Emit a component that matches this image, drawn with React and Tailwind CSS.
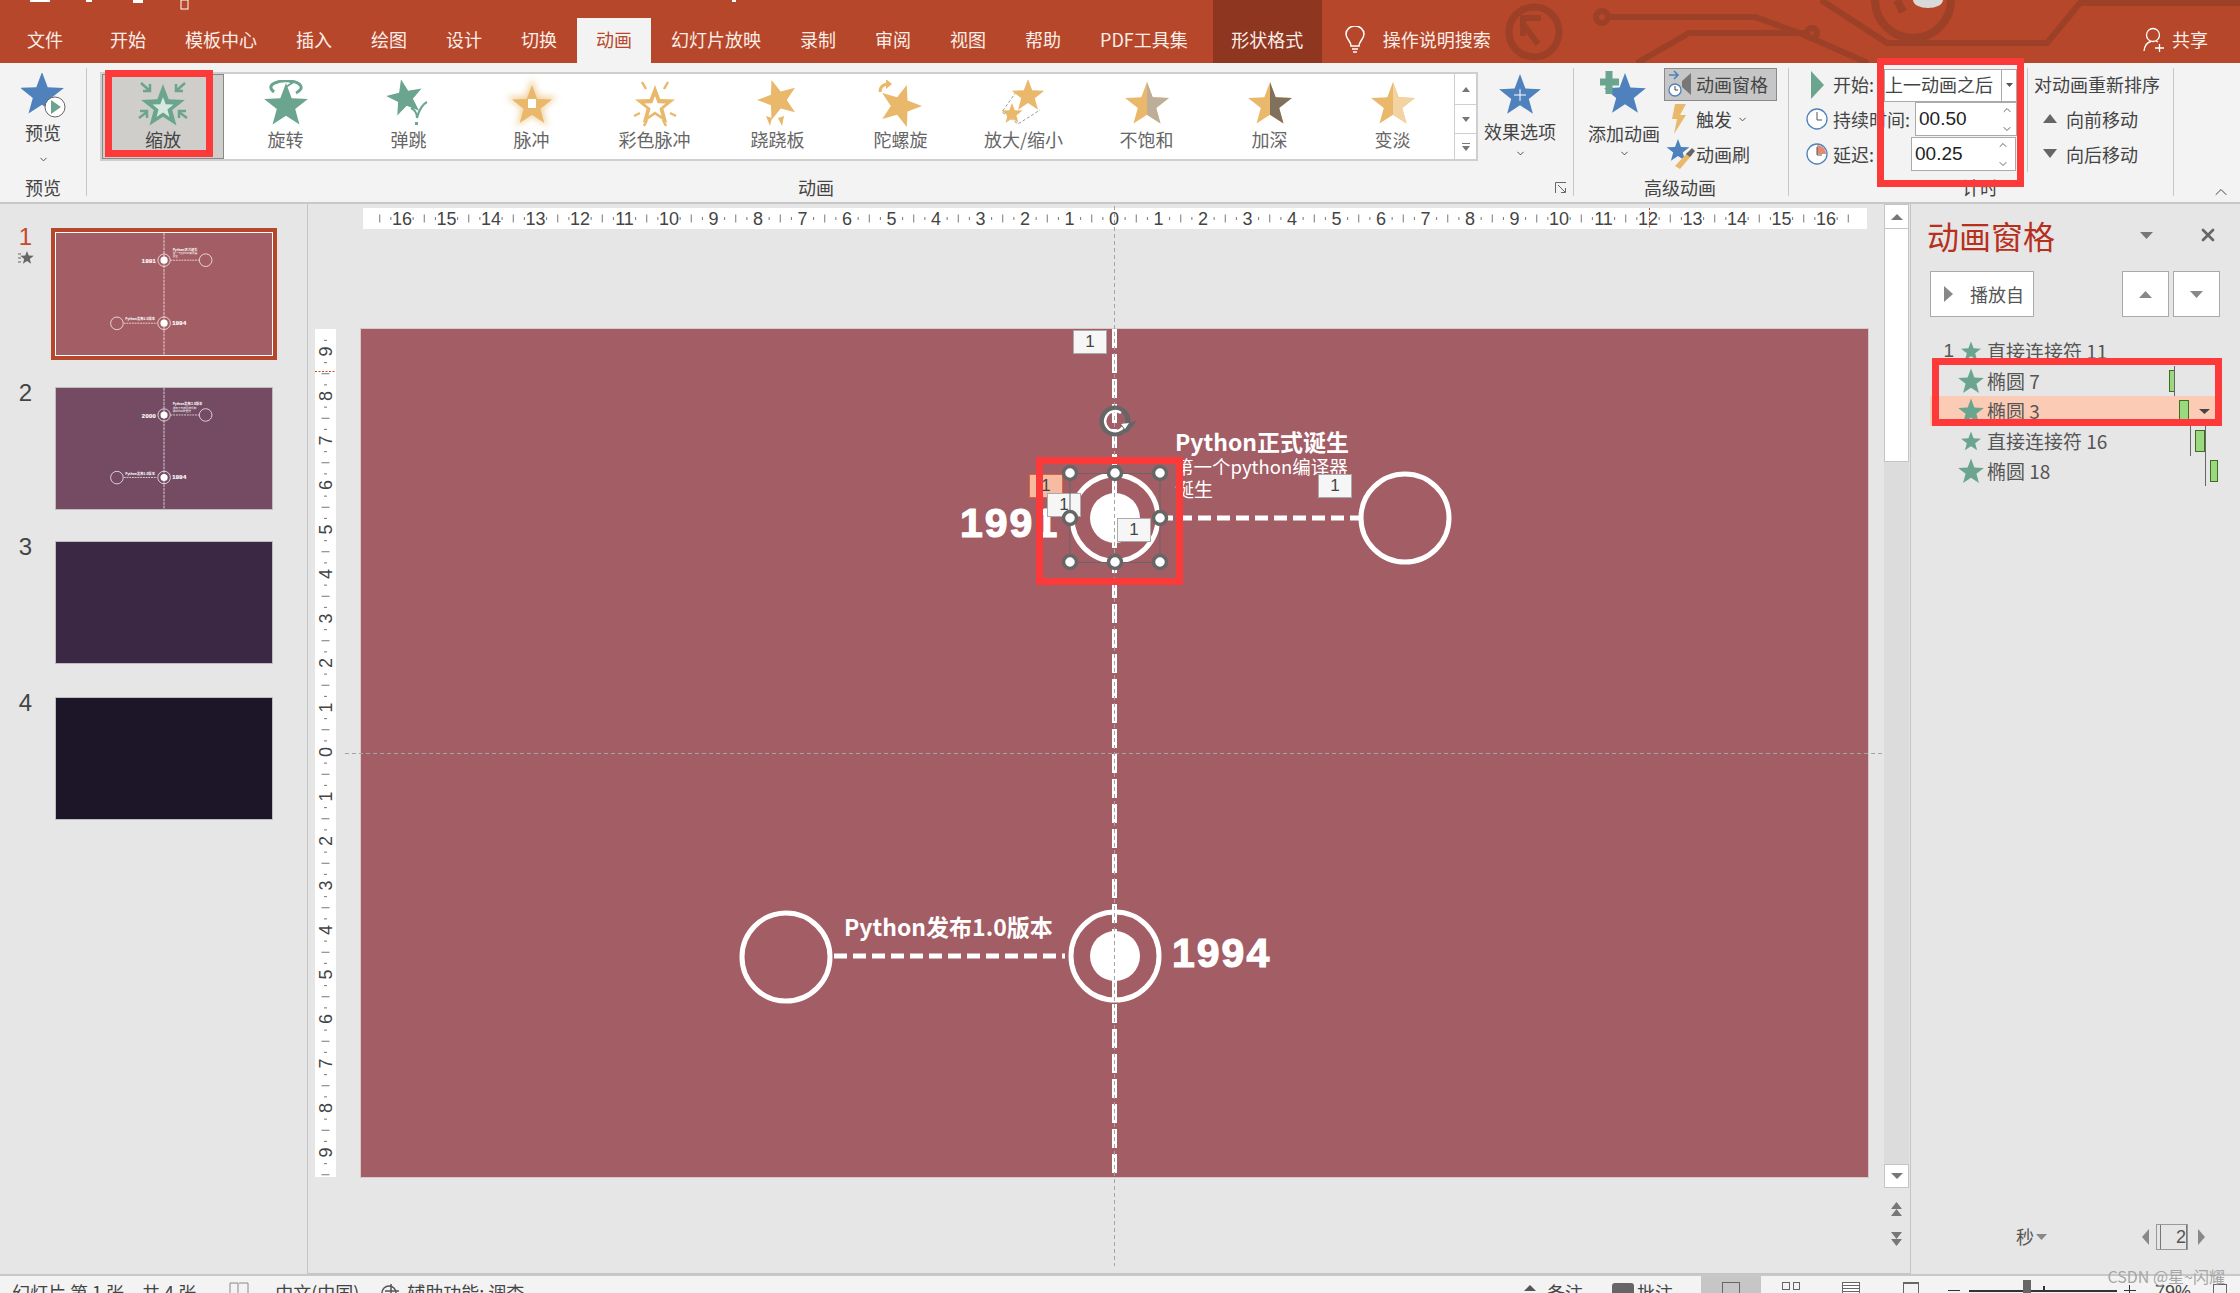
import React from 'react';
import { ChevronDown, ChevronUp, X } from 'lucide-react';

const GREEN = '#6ba58f';
const AMBER = '#e9b86b';
const BLUE = '#4f81bd';
const RED = 'border-[#fc3a3a]';

// 5 point star as a list of points, starting at the top vertex
const starList = (cx, cy, R, rot = 0, ratio = 0.42) => {
  const pts = [];
  for (let i = 0; i < 10; i++) {
    const r = i % 2 === 0 ? R : R * ratio;
    const a = ((i * 36 + rot - 90) * Math.PI) / 180;
    pts.push(`${(cx + r * Math.cos(a)).toFixed(1)},${(cy + r * Math.sin(a)).toFixed(1)}`);
  }
  return pts;
};
const star = (cx, cy, R, rot, ratio) => starList(cx, cy, R, rot, ratio).join(' ');
const halfStar = (cx, cy, R) => starList(cx, cy, R).slice(0, 6).join(' ');

const Star = ({ size = 18, color = GREEN, className = '' }) => (
  <svg width={size} height={size} viewBox="0 0 48 48" className={className}>
    <polygon points={star(24, 26, 25)} fill={color} />
  </svg>
);

const Tri = ({ dir = 'down', w = 12, h = 7, color = '#777', className = '' }) => {
  const pts = {
    down: `0,0 ${w},0 ${w / 2},${h}`,
    up: `0,${h} ${w},${h} ${w / 2},0`,
    left: `${w},0 ${w},${h} 0,${h / 2}`,
    right: `0,0 0,${h} ${w},${h / 2}`,
  };
  return (
    <svg width={w} height={h} className={className}>
      <polygon points={pts[dir]} fill={color} />
    </svg>
  );
};

// Gallery icons, 60x48 box
const ZoomIcon = () => (
  <svg width="60" height="48" viewBox="0 0 60 48">
    <polygon points={star(30, 27, 23)} fill={GREEN} />
    <polygon points={star(30, 28, 11)} fill="#d8e9e2" />
    <g stroke={GREEN} strokeWidth="2.5" fill="none">
      <path d="M8 3 L17 11 M10 11 H17 V4" />
      <path d="M52 3 L43 11 M50 11 H43 V4" />
      <path d="M6 38 L14 32 M7 31 H14 V38" />
      <path d="M54 38 L46 32 M53 31 H46 V38" />
    </g>
  </svg>
);
const SpinIcon = () => (
  <svg width="60" height="48" viewBox="0 0 60 48">
    <polygon points={star(30, 26, 23)} fill={GREEN} />
    <path d="M18 12 C8 4 24 0 34 1 C44 2 50 8 40 13" fill="none" stroke={GREEN} strokeWidth="3" />
    <path d="M30 -1 L36 3 L30 7" fill="none" stroke={GREEN} strokeWidth="2" />
  </svg>
);
const BounceIcon = () => (
  <svg width="60" height="48" viewBox="0 0 60 48">
    <polygon points={star(26, 18, 19, -12)} fill={GREEN} />
    <path d="M32 28 C36 30 38 34 38 38 C40 30 44 24 48 22" fill="none" stroke={GREEN} strokeWidth="2" />
    <rect x="36" y="42" width="3" height="3" fill={GREEN} />
  </svg>
);
const PulseIcon = () => (
  <svg width="60" height="48" viewBox="0 0 60 48" className="overflow-visible">
    <defs>
      <filter id="pulse-blur">
        <feGaussianBlur stdDeviation="3" />
      </filter>
    </defs>
    <polygon points={star(30, 25, 27)} fill={AMBER} opacity="0.6" filter="url(#pulse-blur)" />
    <polygon points={star(30, 26, 21)} fill={AMBER} />
    <rect x="26" y="19" width="8" height="9" fill="#fff" />
  </svg>
);
const ColorPulseIcon = () => (
  <svg width="60" height="48" viewBox="0 0 60 48">
    <polygon points={star(30, 26, 21)} fill={AMBER} />
    <polygon points={star(30, 27, 11)} fill="#fff" />
    <g stroke={AMBER} strokeWidth="2.5">
      <path d="M17 2 L21 9 M43 2 L39 9 M9 36 L15 33 M51 36 L45 33 M19 46 L22 40 M41 46 L38 40" />
    </g>
  </svg>
);
const SeesawIcon = () => (
  <svg width="60" height="48" viewBox="0 0 60 48">
    <polygon points={star(30, 20, 21, -18)} fill={AMBER} />
    <path d="M18 36 L22 46 L24 38 Z M30 38 L34 46 L36 36 Z" fill={AMBER} />
  </svg>
);
const GyroIcon = () => (
  <svg width="60" height="48" viewBox="0 0 60 48">
    <polygon points={star(29, 26, 22, 18)} fill={AMBER} />
    <path d="M9 12 C9 6 13 4 18 4" fill="none" stroke={AMBER} strokeWidth="3" />
    <path d="M15 -1 L21 4 L15 9 Z" fill={AMBER} />
  </svg>
);
const ScaleIcon = () => (
  <svg width="60" height="48" viewBox="0 0 60 48">
    <path d="M22 12 L8 32 L24 44 L46 30" fill="none" stroke="#999" strokeWidth="1" strokeDasharray="3 2" />
    <polygon points={star(34, 16, 17)} fill={AMBER} />
    <polygon points={star(18, 34, 11)} fill={AMBER} />
  </svg>
);
const HalfIcon = ({ tone }) => (
  <svg width="60" height="48" viewBox="0 0 60 48">
    <polygon points={star(30, 25, 23)} fill={AMBER} />
    <polygon points={halfStar(30, 25, 23)} fill={tone} />
  </svg>
);

const gallery = [
  ['缩放', <ZoomIcon />],
  ['旋转', <SpinIcon />],
  ['弹跳', <BounceIcon />],
  ['脉冲', <PulseIcon />],
  ['彩色脉冲', <ColorPulseIcon />],
  ['跷跷板', <SeesawIcon />],
  ['陀螺旋', <GyroIcon />],
  ['放大/缩小', <ScaleIcon />],
  ['不饱和', <HalfIcon tone="#bdae9a" />],
  ['加深', <HalfIcon tone="#81715c" />],
  ['变淡', <HalfIcon tone="#f3d3a2" />],
];

const Circuit = () => (
  <svg className="absolute inset-0" width="2240" height="63" viewBox="0 0 2240 63">
    <g fill="none" stroke="#9c4027" strokeWidth="6">
      <circle cx="1534" cy="32" r="25" strokeWidth="7" />
      <path d="M1538 44 L1523 24 M1523 36 V18 H1541" strokeWidth="6" />
      <circle cx="1602" cy="17" r="6" />
      <path d="M1608 17 H1755 L1802 34 L1868 63" />
      <path d="M1637 63 L1689 33 H1806" />
      <circle cx="1812" cy="33" r="5" />
      <path d="M1821 0 L1887 43 H2047 L2080 3 H2240" />
      <circle cx="1913" cy="0" r="38" strokeWidth="8" />
      <path d="M1897 0 L1903 12" strokeWidth="8" />
    </g>
    <ellipse cx="1928" cy="0" rx="15" ry="8" fill="#d9d9d9" />
    <g fill="#fff">
      <rect x="30" y="0" width="20" height="2" />
      <rect x="86" y="0" width="6" height="2" />
      <rect x="133" y="0" width="10" height="3" />
      <rect x="181" y="0" width="7" height="9" fill="none" stroke="#fff" />
      <rect x="732" y="0" width="4" height="2" />
    </g>
  </svg>
);

const Header = () => {
  const tabs = ['开始', '模板中心', '插入', '绘图', '设计', '切换'];
  const tabsAfter = ['幻灯片放映', '录制', '审阅', '视图', '帮助'];
  return (
    <div className="relative h-[63px] bg-[#b7472a] text-[18px] text-[#fbeee9]">
      <Circuit />
      <div className="relative flex h-full items-end">
        <div className="flex h-[45px] items-center px-[27px] pb-[2px]">文件</div>
        {tabs.map((t) => (
          <div key={t} className="ml-px flex h-[45px] items-center px-[19px] pb-[2px]">{t}</div>
        ))}
        <div className="ml-px flex h-[45px] items-center bg-[#f3f3f3] px-[19px] pb-[2px] text-[#b7472a]">动画</div>
        {tabsAfter.map((t) => (
          <div key={t} className="ml-px flex h-[45px] items-center px-[19px] pb-[2px]">{t}</div>
        ))}
        <div className="flex h-[45px] items-center px-[20px] pb-[2px]">PDF工具集</div>
        <div className="ml-[5px] flex h-full w-[109px] items-end justify-center bg-[#8f3620]">
          <div className="flex h-[45px] items-center pb-[2px]">形状格式</div>
        </div>
        <div className="flex h-[45px] items-center pb-[2px] pl-[22px]">
          <svg width="22" height="28" viewBox="0 0 22 28" fill="none" stroke="#fff" strokeWidth="1.5">
            <path d="M7 20 C7 15 2 13 2 8 A9 8 0 0 1 20 8 C20 13 15 15 15 20 Z" />
            <path d="M8 23 H14 M9 26 H13" />
          </svg>
          <span className="ml-[17px]">操作说明搜索</span>
        </div>
        <div className="ml-auto flex h-[45px] items-center pb-[2px] pr-[32px]">
          <svg width="22" height="26" viewBox="0 0 22 26" fill="none" stroke="#fff" strokeWidth="1.3">
            <circle cx="10" cy="8" r="6.5" />
            <path d="M1 24 C2 17 5 15 8 14.5 M13 14 L15 15 M12 21 H21 M16.5 17 V25" />
          </svg>
          <span className="ml-[7px]">共享</span>
        </div>
      </div>
    </div>
  );
};

const GroupLabel = ({ children, className = '' }) => (
  <div className={`absolute bottom-[-3px] text-[18px] leading-[24px] text-[#444] ${className}`}>{children}</div>
);

const Ribbon = () => (
  <div className="relative flex h-[141px] border-b-2 border-[#c8c8c8] bg-[#f3f3f3] pt-[5px] text-[18px] leading-[24px] text-[#444]">
    {/* preview */}
    <div className="relative flex h-[128px] w-[87px] flex-col items-center border-r border-[#c6c6c6]">
      <svg width="48" height="46" viewBox="0 0 48 46" className="ml-[4px] mt-[5px]">
        <polygon points={star(21, 22, 23)} fill={BLUE} />
        <ellipse cx="34" cy="34" rx="10" ry="10" fill="#fff" stroke="#666" strokeWidth="1" />
        <polygon points="30,27 40,34 30,41" fill={GREEN} />
      </svg>
      <div className="mt-[1px]">预览</div>
      <ChevronDown size={11} className="mt-[10px]" />
      <GroupLabel>预览</GroupLabel>
    </div>

    {/* animation gallery */}
    <div className="relative flex h-[128px] w-[1487px] border-r border-[#c6c6c6] pl-[13px] pt-[4px]">
      <div className="flex h-[89px] w-[1378px] border-2 border-[#cfcfcf] bg-white text-[#666]">
        <div className="flex w-[1353px]">
          {gallery.map(([label, icon], i) => (
            <div
              key={label}
              className={
                i === 0
                  ? 'flex h-[85px] w-[122px] flex-col items-center border border-[#888] bg-[#cfcecb] pt-[5px] text-[#444]'
                  : 'flex h-[85px] w-[123px] flex-col items-center pt-[6px]'
              }
            >
              {icon}
              <div className="-mt-px whitespace-nowrap">{label}</div>
            </div>
          ))}
        </div>
        <div className="ml-auto flex w-[22px] flex-col border-l border-[#cfcfcf]">
          <div className="flex h-[31px] items-center justify-center border-b border-[#cfcfcf]"><Tri dir="up" w={8} h={5} /></div>
          <div className="flex h-[29px] items-center justify-center border-b border-[#cfcfcf]"><Tri w={8} h={5} /></div>
          <div className="flex flex-1 flex-col items-center justify-center gap-[2px]">
            <div className="h-px w-[8px] bg-[#777]" />
            <Tri w={8} h={5} />
          </div>
        </div>
      </div>
      <div className="ml-[-4px] flex w-[92px] flex-col items-center pt-[2px]">
        <svg width="44" height="42" viewBox="0 0 44 42">
          <polygon points={star(22, 22, 22)} fill={BLUE} />
          <path d="M22 15 V27 M16 21 H28" stroke="#fff" strokeWidth="1" />
        </svg>
        <div className="mt-[3px] whitespace-nowrap">效果选项</div>
        <ChevronDown size={11} className="mt-[5px]" />
      </div>
      <GroupLabel className="left-[711px]">动画</GroupLabel>
      <svg width="12" height="12" viewBox="0 0 12 12" className="absolute bottom-[2px] right-[6px]" fill="none" stroke="#666">
        <path d="M0.5 11 V0.5 H11 M3 3 L10 10 M6 10.5 H10.5 V6" />
      </svg>
    </div>

    {/* advanced animation */}
    <div className="relative flex h-[128px] w-[215px] border-r border-[#c6c6c6]">
      <div className="flex w-[90px] flex-col items-center pl-[10px]">
        <svg width="48" height="46" viewBox="0 0 48 46" className="mt-[2px]">
          <polygon points={star(25, 25, 22)} fill={BLUE} />
          <path d="M9 1 V24 M0 12 H19" stroke={GREEN} strokeWidth="7" />
        </svg>
        <div className="mt-[5px] whitespace-nowrap">添加动画</div>
        <ChevronDown size={11} className="mt-[3px]" />
      </div>
      <div className="flex flex-col">
        <div className="flex h-[33px] w-[113px] items-center border border-[#8a8a8a] bg-[#c6c6c6] pb-[2px] pl-[3px]">
          <svg width="26" height="30" viewBox="0 0 26 30">
            <path d="M1 6 H9 M6 2 L10 6 L6 10" stroke={BLUE} strokeWidth="1.6" fill="none" />
            <path d="M14 12 L23 4 V26 L14 18 Z" fill="#777" />
            <circle cx="7" cy="21" r="6" fill="#fff" stroke={BLUE} strokeWidth="1.3" />
            <path d="M7 17 V21 H10" stroke="#444" fill="none" />
          </svg>
          <span className="ml-[2px]">动画窗格</span>
        </div>
        <div className="flex h-[36px] items-center">
          <svg width="32" height="32" viewBox="0 0 32 32">
            <path d="M11 1 H22 L16 12 H22 L10 31 L13 16 H8 Z" fill={AMBER} />
          </svg>
          <span>触发</span>
          <ChevronDown size={11} className="ml-[5px]" />
        </div>
        <div className="flex h-[34px] items-center">
          <svg width="30" height="32" viewBox="0 0 30 32" className="ml-[2px]">
            <polygon points={star(12, 13, 12)} fill={BLUE} />
            <path d="M9 28 L22 14 L26 17 L14 31 Z" fill={AMBER} />
            <path d="M20 16 L26 10 L29 13 L24 19 Z" fill="#666" />
          </svg>
          <span>动画刷</span>
        </div>
      </div>
      <GroupLabel className="left-[70px]">高级动画</GroupLabel>
    </div>

    {/* timing */}
    <div className="relative flex h-[128px] w-[385px] border-r border-[#c6c6c6]">
      <div className="flex w-[238px] flex-col pl-[17px]">
        <div className="flex h-[34px] items-center">
          <div className="flex w-[22px] justify-center"><Tri dir="right" w={13} h={28} color={GREEN} /></div>
          <span className="ml-[5px] w-[51px] pb-[2px]">开始:</span>
          <div className="flex h-[33px] w-[133px] items-center border border-[#aaa] bg-white">
            <span className="flex-1 whitespace-nowrap pb-[2px]">上一动画之后</span>
            <div className="flex h-full w-[15px] items-center justify-center border-l border-[#aaa]"><Tri w={7} h={4} color="#555" /></div>
          </div>
        </div>
        <div className="flex h-[34px] items-center">
          <svg width="22" height="24" viewBox="0 0 22 24">
            <circle cx="11" cy="12" r="10" fill="#fff" stroke={BLUE} strokeWidth="1.3" />
            <path d="M11 5 V13 H16" fill="none" stroke="#555" />
          </svg>
          <span className="ml-[5px] w-[82px] whitespace-nowrap">持续时间:</span>
          <div className="flex h-[34px] w-[102px] items-center justify-between border border-[#aaa] bg-white pl-[3px] pr-[3px] font-['Liberation_Sans',sans-serif] text-[19px] text-[#222]">
            00.50
            <div className="flex flex-col gap-[7px] text-[#666]"><ChevronUp size={12} /><ChevronDown size={12} /></div>
          </div>
        </div>
        <div className="mt-px flex h-[34px] items-center">
          <svg width="22" height="24" viewBox="0 0 22 24">
            <circle cx="11" cy="12" r="10" fill="#fff" stroke={BLUE} strokeWidth="1.3" />
            <path d="M11 12 V3 A9 9 0 0 1 20 12 Z" fill="#e28b70" />
            <path d="M11 5 V13 H16" fill="none" stroke="#555" />
          </svg>
          <span className="ml-[5px] w-[78px]">延迟:</span>
          <div className="flex h-[34px] w-[105px] items-center justify-between border border-[#aaa] bg-white pl-[3px] pr-[6px] font-['Liberation_Sans',sans-serif] text-[19px] text-[#222]">
            00.25
            <div className="flex flex-col gap-[7px] text-[#666]"><ChevronUp size={12} /><ChevronDown size={12} /></div>
          </div>
        </div>
      </div>
      <div className="flex h-[104px] flex-col border-l border-[#c6c6c6] pl-[6px]">
        <div className="flex h-[34px] items-center whitespace-nowrap pb-[2px]">对动画重新排序</div>
        <div className="flex h-[35px] items-center pb-[2px] pl-[9px]">
          <Tri dir="up" w={14} h={9} color="#666" />
          <span className="ml-[9px] whitespace-nowrap">向前移动</span>
        </div>
        <div className="flex h-[35px] items-center pb-[2px] pl-[9px]">
          <Tri w={14} h={9} color="#666" />
          <span className="ml-[9px] whitespace-nowrap">向后移动</span>
        </div>
      </div>
      <GroupLabel className="left-[173px]">计时</GroupLabel>
    </div>

    <ChevronUp size={20} strokeWidth={1.2} className="absolute bottom-[0px] right-[9px] text-[#444]" />

    {/* red annotation boxes */}
    <div className={`absolute left-[105px] top-[7px] h-[87px] w-[108px] border-[7px] ${RED}`} />
    <div className={`absolute left-[1877px] top-[-5px] h-[129px] w-[147px] border-[7px] ${RED}`} />
  </div>
);

// The slide artwork, also used small for the thumbnails
const Diagram = ({ bg, topYear = '1991', topTitle = 'Python正式诞生', line1 = '第一个python编译器', line2 = '诞生', bottomTitle = 'Python发布1.0版本', className = '' }) => (
  <svg viewBox="0 0 1507 848" preserveAspectRatio="none" className={className}>
    <rect width="1507" height="848" fill={bg} />
    <g fill="none" stroke="#fff" strokeWidth="5">
      <path d="M753.5 0 V848" strokeDasharray="19 6" />
      <path d="M799 189 H998" strokeDasharray="13 6" />
      <path d="M473 627 H704" strokeDasharray="13 6" />
      <circle cx="754" cy="189" r="43" />
      <circle cx="1044" cy="189" r="44" />
      <circle cx="754" cy="627" r="44" />
      <circle cx="425" cy="628" r="44" />
    </g>
    <circle cx="754" cy="189" r="25" fill="#fff" />
    <circle cx="754" cy="627" r="25" fill="#fff" />
    <g fill="#fff" fontFamily="'Noto Sans CJK SC', sans-serif">
      <text x="814" y="122" fontSize="23" fontWeight="700">{topTitle}</text>
      <text x="814" y="145" fontSize="18.5">{line1}</text>
      <text x="814" y="168" fontSize="19">{line2}</text>
      <text x="483" y="607" fontSize="23" fontWeight="700">{bottomTitle}</text>
    </g>
    <g fill="#fff" stroke="#fff" strokeWidth="1.2" fontFamily="'Liberation Sans', sans-serif" fontSize="41" fontWeight="700" letterSpacing="2">
      <text x="599" y="208">{topYear}</text>
      <text x="811" y="638">1994</text>
    </g>
  </svg>
);

const ThumbRow = ({ num, className, bg, children }) => (
  <div className={`flex items-start ${className}`}>
    <div className="-mt-[7px] w-[51px] text-center font-['Liberation_Sans',sans-serif] text-[24px] leading-[26px] text-[#444]">{num}</div>
    <div className={`ml-[4px] h-[123px] w-[218px] border border-[#bdbdbd] ${bg}`}>{children}</div>
  </div>
);

const Thumbs = () => (
  <div className="w-[308px] shrink-0 border-r border-[#c4c4c4] pt-[24px]">
    <div className="flex h-[132px] items-start">
      <div className="-mt-[4px] flex w-[51px] flex-col items-center text-[24px] leading-[26px] text-[#c8482a]">
        <span className="font-['Liberation_Sans',sans-serif]">1</span>
        <svg width="16" height="14" viewBox="0 0 16 14" className="mt-[1px]">
          <polygon points={star(9, 7, 7)} fill="#666" />
          <path d="M0 3 H3 M0 7 H3 M0 11 H3" stroke="#666" />
        </svg>
      </div>
      <div className="h-[132px] w-[226px] border-4 border-[#b7472a]">
        <div className="h-full w-full border border-white">
          <Diagram bg="#a35d64" className="h-full w-full" />
        </div>
      </div>
    </div>
    <ThumbRow num="2" className="mt-[27px]">
      <Diagram bg="#744b63" topYear="2000" topTitle="Python发布2.0版本" line1="增加了内存回收机制" line2="和unicode支持" className="h-full w-full" />
    </ThumbRow>
    <ThumbRow num="3" className="mt-[31px]" bg="bg-[#3a2845]" />
    <ThumbRow num="4" className="mt-[33px]" bg="bg-[#1c1628]" />
  </div>
);

const Ruler = ({ vertical = false, length, half }) => {
  const unit = 44.5;
  const max = Math.floor(half / unit);
  const ticks = [];
  for (let i = -max * 4 - 2; i <= max * 4 + 2; i++) {
    const p = half + (i * unit) / 4;
    if (p < 2 || p > length - 2 || i % 4 === 0) continue;
    const len = i % 2 === 0 ? 8 : 3;
    ticks.push(vertical ? (
      <path key={i} d={`M${10.5 - len / 2} ${p} H${10.5 + len / 2}`} stroke="#777" />
    ) : (
      <path key={i} d={`M${p} ${10.5 - len / 2} V${10.5 + len / 2}`} stroke="#777" />
    ));
  }
  const labels = [];
  for (let n = -max; n <= max; n++) {
    const p = half + n * unit;
    labels.push(
      <text
        key={n}
        x={vertical ? 10.5 : p}
        y={vertical ? p : 10.5}
        textAnchor="middle"
        dominantBaseline="central"
        fontSize="18"
        fill="#444"
        fontFamily="'Liberation Sans', sans-serif"
        transform={vertical ? `rotate(-90 10.5 ${p})` : undefined}
      >
        {Math.abs(n)}
      </text>,
    );
  }
  return (
    <svg width={vertical ? 21 : length} height={vertical ? length : 21} className="bg-white">
      {ticks}
      {labels}
      {vertical ? (
        <path d="M0 42.5 H21" stroke="#c8482a" strokeDasharray="2 1.5" />
      ) : (
        <path d="M1286.5 0 V21" stroke="#c8482a" strokeDasharray="2 1.5" />
      )}
    </svg>
  );
};

const Tag = ({ className, active = false }) => (
  <div
    className={`absolute flex h-[24px] w-[34px] items-center justify-center border font-['Liberation_Sans',sans-serif] text-[17px] text-[#444] ${
      active ? 'border-[#e0603a] bg-[#f5bca3]' : 'border-[#aaa] bg-[#f6f6f6]'
    } ${className}`}
  >
    1
  </div>
);

const Handle = ({ x, y }) => <circle cx={x} cy={y} r="6.5" fill="#fff" stroke="#666" strokeWidth="3.5" />;

// Guides and the selection frame, drawn in page coordinates
const SelectionLayer = () => (
  <svg className="absolute inset-0" width="1603" height="1067" viewBox="308 204 1603 1067" fill="none">
    <path d="M1114.5 206 V1266 M345 753.5 H1885" stroke="#a5a5a5" strokeWidth="1" strokeDasharray="4 3" />
    <rect x="1070" y="473.5" width="90" height="89" stroke="#666" />
    <circle cx="1115" cy="421" r="13" stroke="#666" strokeWidth="5" />
    <path d="M1121 413 A10 10 0 1 0 1125 423" stroke="#fff" strokeWidth="2.5" />
    <polygon points="1120,424 1137,421 1127,433" fill="#666" />
    <path d="M1121 424 L1129 423 L1125 429 Z" fill="#fff" />
    <Handle x={1070} y={473} />
    <Handle x={1115} y={473} />
    <Handle x={1160} y={473} />
    <Handle x={1070} y={518} />
    <Handle x={1160} y={518} />
    <Handle x={1070} y={562} />
    <Handle x={1115} y={562} />
    <Handle x={1160} y={562} />
  </svg>
);

const Scrollbar = () => (
  <div className="flex w-[25px] flex-col">
    <div className="flex h-[25px] items-center justify-center border border-[#c4c4c4] bg-white"><Tri dir="up" w={12} h={6} /></div>
    <div className="h-[233px] border-x border-b border-[#c4c4c4] bg-white" />
    <div className="h-[702px] bg-[#dcdcdc]" />
    <div className="flex h-[24px] items-center justify-center border border-[#c4c4c4] bg-white"><Tri w={12} h={6} /></div>
    <div className="mt-[6px] flex h-[30px] flex-col items-center justify-center">
      <Tri dir="up" w={11} h={7} />
      <Tri dir="up" w={11} h={7} />
    </div>
    <div className="flex h-[30px] flex-col items-center justify-center">
      <Tri w={11} h={7} />
      <Tri w={11} h={7} />
    </div>
  </div>
);

const Canvas = () => (
  <div className="relative flex w-[1603px] shrink-0 border-b border-r border-[#c4c4c4]">
    <div className="w-[1576px] pt-[4px]">
      <div className="ml-[55px] w-[1504px]">
        <Ruler length={1504} half={751} />
      </div>
      <div className="mt-[100px] flex">
        <div className="ml-[7px] w-[21px]">
          <Ruler vertical length={848} half={423} />
        </div>
        <div className="relative ml-[25px] h-[848px] w-[1507px] shadow-[0_0_0_1px_#d8c8c8]">
          <Diagram bg="#a35d64" className="h-full w-full" />
          <Tag className="left-[712px] top-[1px]" />
          <Tag active className="left-[668px] top-[145px]" />
          <Tag className="left-[686px] top-[164px]" />
          <Tag className="left-[756px] top-[189px]" />
          <Tag className="left-[957px] top-[145px]" />
        </div>
      </div>
    </div>
    <Scrollbar />
    <SelectionLayer />
    <div className={`absolute left-[728px] top-[253px] h-[128px] w-[147px] border-[7px] ${RED}`} />
  </div>
);

const paneRows = [
  { name: '直接连接符 11', num: '1', size: 17 },
  { name: '椭圆 7', size: 23 },
  { name: '椭圆 3', size: 23, active: true },
  { name: '直接连接符 16', size: 17 },
  { name: '椭圆 18', size: 23 },
];

const TaskPane = () => (
  <div className="relative flex-1 text-[#555]">
    <div className="flex h-[67px] items-center pb-[5px] pl-[16px]">
      <span className="text-[32px] leading-[40px] text-[#b7301e]">动画窗格</span>
      <Tri w={13} h={7} color="#777" className="ml-[85px]" />
      <X size={20} strokeWidth={3.2} className="ml-[45px] text-[#666]" />
    </div>
    <div className="ml-[19px] flex h-[46px]">
      <div className="flex w-[104px] items-center border border-[#aaa] bg-white pl-[13px] text-[18px]">
        <Tri dir="right" w={9} h={16} color="#888" />
        <span className="ml-[17px]">播放自</span>
      </div>
      <div className="ml-[88px] flex w-[47px] items-center justify-center border border-[#aaa] bg-white"><Tri dir="up" w={13} h={7} color="#888" /></div>
      <div className="ml-[4px] flex w-[47px] items-center justify-center border border-[#aaa] bg-white"><Tri w={13} h={7} color="#888" /></div>
    </div>
    <div className="relative ml-[19px] mt-[19px] w-[290px]">
      {paneRows.map((row) => (
        <div key={row.name} className={`flex h-[30px] items-center text-[19px] ${row.active ? 'bg-[#fbcbb5]' : ''}`}>
          <div className="flex w-[57px] items-center justify-end">
            {row.num && <span className="mr-[7px] font-['Liberation_Sans',sans-serif]">{row.num}</span>}
            <Star size={row.size + 3} className={row.size === 17 ? 'mr-[6px]' : 'mr-[3px]'} />
          </div>
          <span className="whitespace-nowrap">{row.name}</span>
        </div>
      ))}
      {/* timeline bars */}
      <svg className="absolute left-0 top-0" width="290" height="156" viewBox="1930 336 290 156">
        <g fill="#9bd97f" stroke="#3f6b22" strokeWidth="1">
          <rect x="2169.5" y="370.5" width="5" height="21" />
          <rect x="2179.5" y="400.5" width="9" height="23" />
          <rect x="2195.5" y="430.5" width="9" height="21" />
          <rect x="2210.5" y="460.5" width="7" height="21" />
        </g>
        <path d="M2174.5 366 V396 M2190.5 426 V456 M2205.5 426 V486" stroke="#666" fill="none" />
        <polygon points="2199,409 2210,409 2204.5,414" fill="#444" />
      </svg>
    </div>
    <div className="mt-[737px] flex items-center pl-[105px] text-[18px]">
      <span>秒</span>
      <Tri w={11} h={6} color="#888" className="ml-[2px]" />
      <Tri dir="left" w={7} h={16} color="#888" className="ml-[95px]" />
      <div className="ml-[7px] flex h-[26px] w-[32px] items-center justify-end border border-[#999] font-['Liberation_Sans',sans-serif] leading-none">
        <div className="flex h-full w-[27px] items-center justify-end overflow-hidden border-x border-[#777]">2</div>
      </div>
      <Tri dir="right" w={7} h={16} color="#888" className="ml-[10px]" />
    </div>
    <div className={`absolute left-[21px] top-[154px] h-[68px] w-[290px] border-[7px] ${RED}`} />
  </div>
);

const StatusBar = () => (
  <div className="relative flex h-[19px] overflow-hidden border-t-2 border-[#c8c8c8] bg-[#f3f3f3] text-[18px] leading-[24px] text-[#444]">
    <span className="ml-[12px] mt-[4px] whitespace-nowrap">幻灯片 第 1 张，共 4 张</span>
    <svg width="22" height="20" viewBox="0 0 22 20" className="ml-[33px] mt-[6px]" fill="none" stroke="#888">
      <path d="M1 1 H9 V20 H1 Z M10 1 H19 V20" />
    </svg>
    <span className="ml-[24px] mt-[4px] whitespace-nowrap">中文(中国)</span>
    <svg width="20" height="20" viewBox="0 0 20 20" className="ml-[22px] mt-[7px]" fill="none" stroke="#555" strokeWidth="1.5">
      <circle cx="8" cy="10" r="7" />
      <path d="M10 1 V14 M4 8 H18" />
    </svg>
    <span className="ml-[6px] mt-[4px] whitespace-nowrap">辅助功能: 调查</span>

    <div className="absolute left-[1524px] top-0 flex h-[17px] items-start">
      <Tri dir="up" w={12} h={6} color="#555" className="mt-[9px]" />
      <div className="ml-[11px] mt-[4px] whitespace-nowrap">备注</div>
      <div className="ml-[29px] mt-[7px] h-[14px] w-[22px] rounded-[3px] bg-[#666]" />
      <div className="ml-[3px] mt-[4px] whitespace-nowrap">批注</div>
      <div className="ml-[28px] flex h-[17px] w-[60px] justify-center bg-[#c6c6c6]">
        <div className="mt-[6px] h-[14px] w-[18px] border border-[#666]" />
      </div>
      <div className="flex w-[60px] justify-center pt-[6px]">
        <div className="grid w-[18px] grid-cols-2 gap-[3px]">
          <div className="h-[8px] border border-[#666]" />
          <div className="h-[8px] border border-[#666]" />
        </div>
      </div>
      <div className="flex w-[60px] justify-center pt-[6px]">
        <div className="h-[14px] w-[18px] border border-[#666] bg-[repeating-linear-gradient(#fff_0,#fff_2px,#666_2px,#666_3px)]" />
      </div>
      <div className="flex w-[60px] justify-center pt-[6px]">
        <div className="h-[14px] w-[16px] border-x border-t-2 border-[#666]" />
      </div>
      <div className="ml-[7px] mt-[14px] h-px w-[12px] bg-[#333]" />
      <div className="relative ml-[9px] mt-[14px] h-[2px] w-[148px] bg-[#333]">
        <div className="absolute left-[54px] top-[-10px] h-[14px] w-[8px] bg-[#666]" />
        <div className="absolute left-[74px] top-[-4px] h-[6px] w-[2px] bg-[#333]" />
      </div>
      <div className="relative ml-[7px] mt-[9px] h-[10px] w-[12px]">
        <div className="absolute left-0 top-[5px] h-px w-[12px] bg-[#333]" />
        <div className="absolute left-[5px] top-0 h-[11px] w-px bg-[#333]" />
      </div>
      <div className="ml-[19px] mt-[4px] font-['Liberation_Sans',sans-serif]">79%</div>
      <div className="ml-[22px] mt-[8px] h-[14px] w-[14px] border border-[#666]" />
    </div>
  </div>
);

const App = () => (
  <div className="relative h-[1293px] w-[2240px] overflow-hidden bg-[#e6e6e6] font-['Noto_Sans_CJK_SC','Liberation_Sans',sans-serif]">
    <Header />
    <Ribbon />
    <div className="flex h-[1070px]">
      <Thumbs />
      <Canvas />
      <TaskPane />
    </div>
    <StatusBar />
    <div className="absolute right-[15px] top-[1265px] text-[16px] leading-[22px] text-[#a6a6a6]">CSDN @星~闪耀</div>
  </div>
);

export default App;
